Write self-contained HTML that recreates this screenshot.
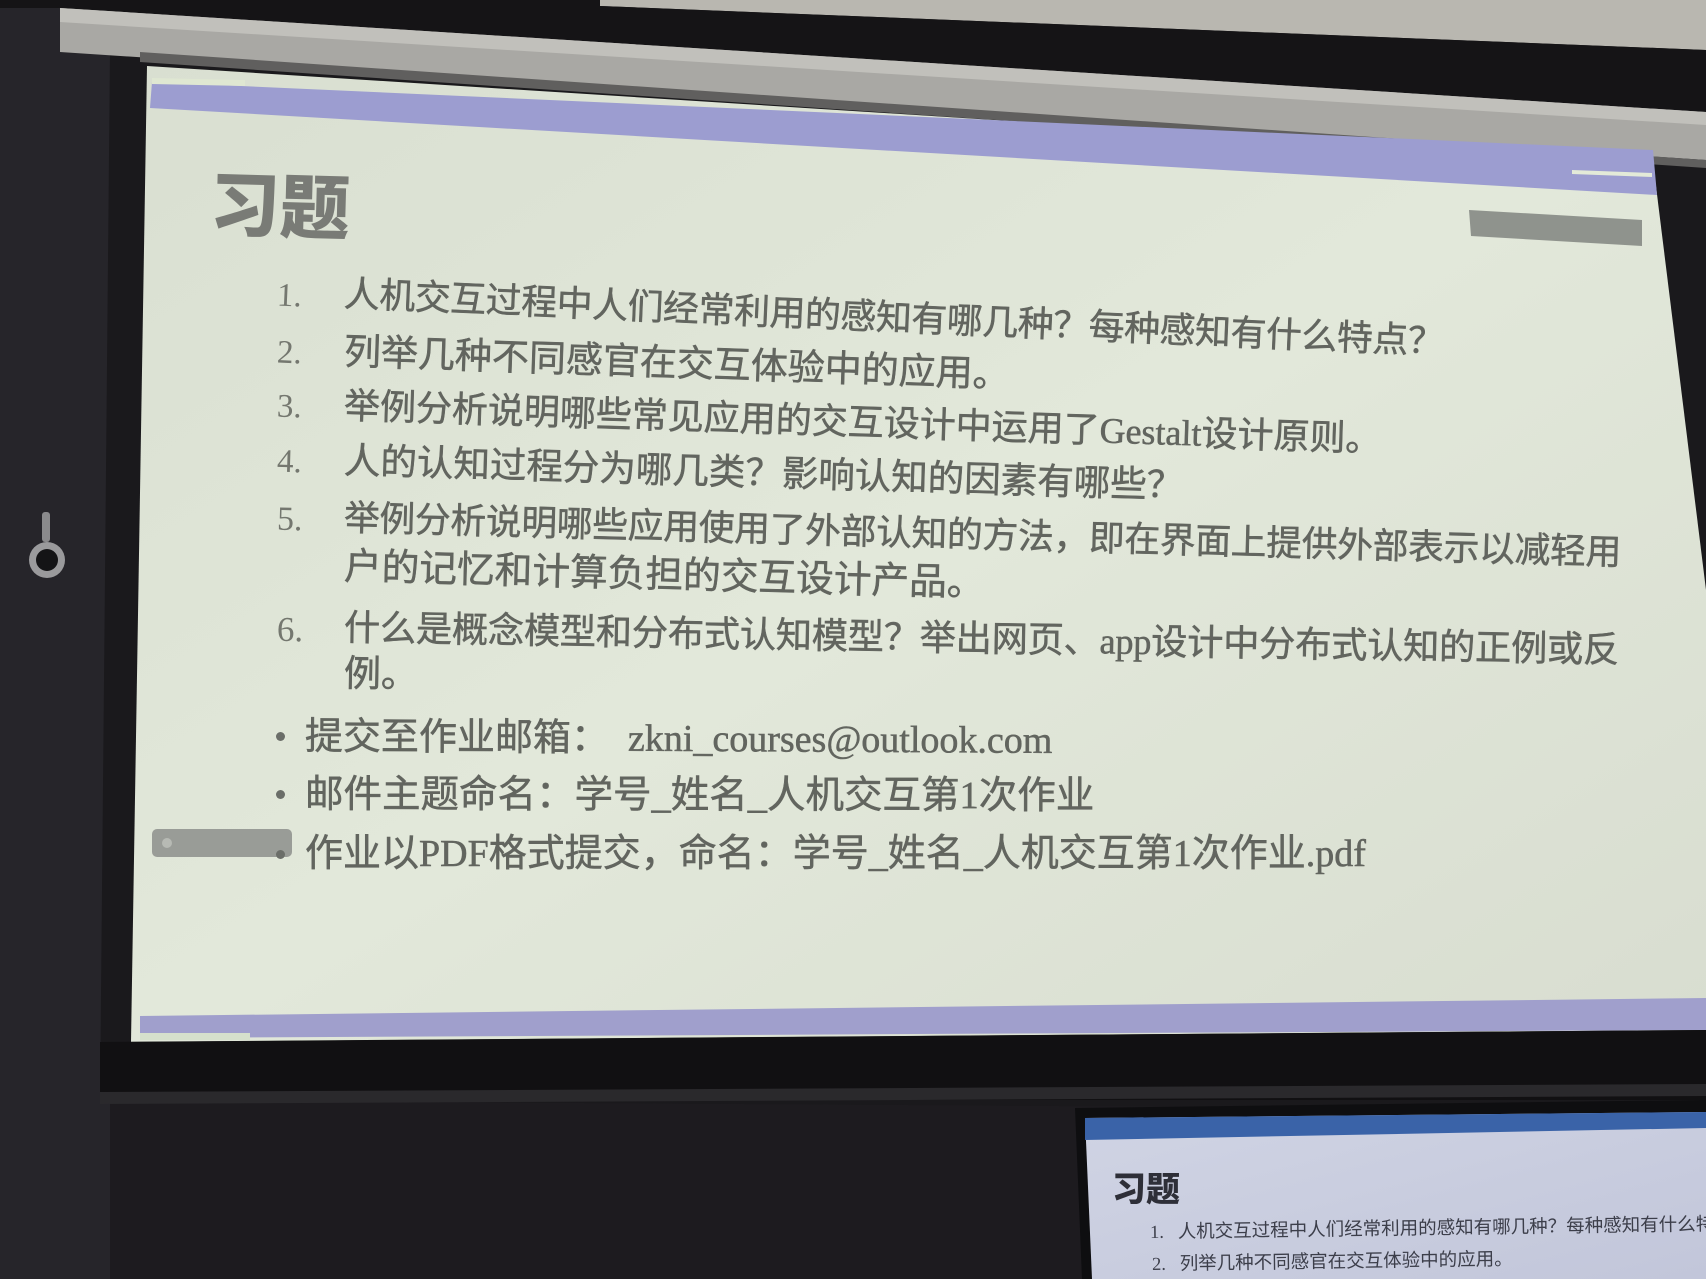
<!DOCTYPE html>
<html><head><meta charset="utf-8"><style>
html,body{margin:0;padding:0;width:1706px;height:1279px;overflow:hidden;background:#1d1b1f}
.s{position:absolute;left:0;top:0}
.t{position:absolute;white-space:nowrap;transform-origin:0 50%;font-family:"Liberation Serif","Noto Sans CJK SC",serif;color:#62655f;line-height:1;-webkit-text-stroke:0.5px #62655f}
.n{position:absolute;font-family:"Liberation Serif",serif;color:#74776f;line-height:1}
.m{position:absolute;white-space:nowrap;font-family:"Liberation Serif","Noto Sans CJK SC",serif;color:#3c3e4a;line-height:1;transform-origin:0 50%}
.d{position:absolute;width:9px;height:9px;border-radius:50%;background:#6b6e69}
</style></head><body>
<svg class="s" width="1706" height="1279" viewBox="0 0 1706 1279">
<defs>
<linearGradient id="g1" x1="0" y1="0" x2="1" y2="1">
<stop offset="0" stop-color="#d9dfd1"/><stop offset="0.5" stop-color="#e2e8da"/><stop offset="1" stop-color="#d8ddd0"/>
</linearGradient>
<linearGradient id="g2" x1="0" y1="0" x2="1" y2="1">
<stop offset="0" stop-color="#d0d4e4"/><stop offset="1" stop-color="#c2c6da"/>
</linearGradient>
</defs>
<rect width="1706" height="1279" fill="#1d1b1f"/>
<rect x="0" y="0" width="110" height="1279" fill="#26252a"/>
<polygon points="600,0 1706,0 1706,50 600,6" fill="#b9b7b0"/>
<polygon points="0,0 600,0 600,6 1706,50 1706,112 60,8 0,8" fill="#151416"/>
<polygon points="110,50 1706,160 1706,1110 100,1100" fill="#1a191c"/>
<polygon points="60,8 1706,112 1706,160 60,52" fill="#a9a8a4"/>
<polygon points="60,8 1706,112 1706,125 60,22" fill="#c1c0bb"/>
<polygon points="140,52 1706,160 1706,168 140,62" fill="#605f5e"/>
<polygon points="147,66 1653,162 1706,590 1706,1030 131,1042" fill="url(#g1)"/>
<polygon points="152,82 1653,150 1657,195 150,108" fill="#9c9dd0"/>
<polygon points="152,78 245,80 245,86 152,84" fill="#dfe7d2"/>
<polygon points="1572,170 1652,173 1652,177 1572,174" fill="#e3ead8"/>
<polygon points="140,1016 1706,998 1706,1030 140,1038" fill="#a09fcc"/>
<polygon points="140,1033 250,1033 250,1040 140,1040" fill="#d6e0cc"/>
<polygon points="1469,210 1642,220 1642,246 1471,236" fill="#8f938d"/>
<rect x="152" y="829" width="140" height="28" rx="5" fill="#999c97"/>
<circle cx="167" cy="843" r="5" fill="#b7bab4"/>
<circle cx="47" cy="560" r="18" fill="#9a9a9c"/>
<circle cx="47" cy="560" r="11" fill="#141416"/>
<rect x="42" y="512" width="8" height="30" rx="3" fill="#8a8a8c"/>
<polygon points="100,1042 1706,1030 1706,1100 100,1100" fill="#111012"/>
<polygon points="100,1092 1706,1084 1706,1096 100,1104" fill="#2a292c"/>
<polygon points="1075,1108 1706,1100 1706,1279 1082,1279" fill="#0e0e10"/>
<polygon points="1085,1118 1706,1112 1706,1279 1092,1279" fill="url(#g2)"/>
<polygon points="1085,1118 1706,1112 1706,1128 1085,1140" fill="#3a63a8"/>
</svg>

<div class="t" style="left:210px;top:166px;font-family:'Noto Sans CJK SC',sans-serif;font-weight:900;font-size:70px;color:#797b76;-webkit-text-stroke:0;transform:rotate(1.5deg)">习题</div>

<div class="n" style="left:277px;top:280px;font-size:33px;transform:rotate(2.5deg)">1.</div>
<div class="t" style="left:344px;top:277px;font-size:35.8px;letter-spacing:-0.3px;transform:rotate(2.5deg)">人机交互过程中人们经常利用的感知有哪几种？每种感知有什么特点？</div>
<div class="n" style="left:277px;top:337px;font-size:33px;transform:rotate(2.2deg)">2.</div>
<div class="t" style="left:344px;top:334px;font-size:37px;transform:rotate(2deg)">列举几种不同感官在交互体验中的应用。</div>
<div class="n" style="left:277px;top:391px;font-size:33px;transform:rotate(2deg)">3.</div>
<div class="t" style="left:344px;top:388px;font-size:36px;transform:rotate(1.85deg)">举例分析说明哪些常见应用的交互设计中运用了Gestalt设计原则。</div>
<div class="n" style="left:277px;top:446px;font-size:33px;transform:rotate(1.7deg)">4.</div>
<div class="t" style="left:344px;top:443px;font-size:36.5px;transform:rotate(1.7deg)">人的认知过程分为哪几类？影响认知的因素有哪些？</div>
<div class="n" style="left:277px;top:503px;font-size:34px;transform:rotate(1.6deg)">5.</div>
<div class="t" style="left:344px;top:501px;font-size:35.7px;letter-spacing:-0.2px;transform:rotate(1.55deg)">举例分析说明哪些应用使用了外部认知的方法，即在界面上提供外部表示以减轻用</div>
<div class="t" style="left:344px;top:549px;font-size:37.7px;transform:rotate(1.5deg)">户的记忆和计算负担的交互设计产品。</div>
<div class="n" style="left:277px;top:612px;font-size:35px;transform:rotate(1deg)">6.</div>
<div class="t" style="left:344px;top:610px;font-size:36.2px;letter-spacing:-0.2px;transform:rotate(1deg)">什么是概念模型和分布式认知模型？举出网页、app设计中分布式认知的正例或反</div>
<div class="t" style="left:344px;top:656px;font-size:37px;transform:rotate(1deg)">例。</div>

<div class="d" style="left:276px;top:732px"></div>
<div class="t" style="left:305px;top:718px;font-size:38px;transform:rotate(0.3deg)">提交至作业邮箱：&nbsp;&nbsp;zkni_courses@outlook.com</div>
<div class="d" style="left:276px;top:790px"></div>
<div class="t" style="left:305px;top:776px;font-size:38.5px;transform:rotate(0.1deg)">邮件主题命名：学号_姓名_人机交互第1次作业</div>
<div class="d" style="left:276px;top:850px"></div>
<div class="t" style="left:305px;top:835px;font-size:38px;transform:rotate(0deg)">作业以PDF格式提交，命名：学号_姓名_人机交互第1次作业.pdf</div>

<div class="m" style="left:1112px;top:1170px;font-family:'Noto Sans CJK SC',sans-serif;font-weight:900;font-size:34px;color:#2e2f38">习题</div>
<div class="m" style="left:1150px;top:1224px;font-size:18.5px;transform:rotate(-0.8deg)">1.&nbsp;&nbsp;&nbsp;人机交互过程中人们经常利用的感知有哪几种？每种感知有什么特点？</div>
<div class="m" style="left:1152px;top:1256px;font-size:18.5px;transform:rotate(-0.8deg)">2.&nbsp;&nbsp;&nbsp;列举几种不同感官在交互体验中的应用。</div>
</body></html>
